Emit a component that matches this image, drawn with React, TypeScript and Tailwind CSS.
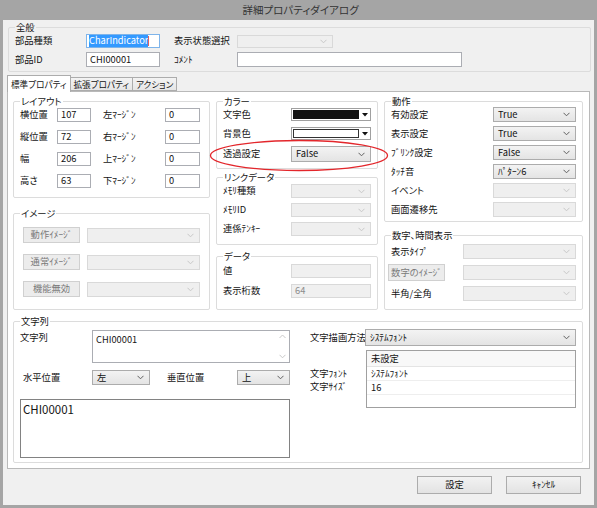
import React from "react";

const font = "font-['Noto_Sans_CJK_JP',sans-serif]";

function Chevron({ light = false }: { light?: boolean }) {
  return (
    <svg width="7" height="5" viewBox="0 0 7 5" className="shrink-0">
      <polyline points="0.5,0.8 3.5,3.8 6.5,0.8" fill="none" stroke={light ? "#c8c8c8" : "#606060"} strokeWidth="1" />
    </svg>
  );
}

function Combo({ className = "", value = "", disabled = false }: { className?: string; value?: string; disabled?: boolean }) {
  return (
    <div
      className={`flex items-center justify-between pl-[4px] pr-[5px] border leading-none whitespace-nowrap ${
        disabled ? "border-[#d9d9d9] bg-[#efefef] text-[#9a9a9a]" : "border-[#acacac] bg-linear-to-b from-[#f3f3f3] to-[#e4e4e4] text-[#111]"
      } ${className}`}
    >
      <span>{value}</span>
      <Chevron light={disabled} />
    </div>
  );
}

function Field({ className = "", value = "", disabled = false }: { className?: string; value?: string; disabled?: boolean }) {
  return (
    <div
      className={`flex items-center px-[3px] border leading-none ${
        disabled ? "border-[#d9d9d9] bg-[#f0f0f0] text-[#8c8c8c]" : "border-[#abadb3] bg-white text-[#111]"
      } ${className}`}
    >
      {value}
    </div>
  );
}

function Group({ label, className = "", children }: { label: string; className?: string; children?: React.ReactNode }) {
  return (
    <fieldset className={`border border-[#dcdcdc] rounded-[2px] px-[6px] min-w-0 ${className}`}>
      <legend className="px-[1px] leading-[12px] text-[#141414]">{label}</legend>
      {children}
    </fieldset>
  );
}

function ColorCombo({ dark }: { dark: boolean }) {
  return (
    <div className="w-[80px] h-[13px] border border-[#a0a0a0] bg-white flex items-center pl-[1px] py-[1px]">
      <div className={`flex-1 h-full ${dark ? "bg-[#111]" : "bg-white border border-[#333]"}`} />
      <div className="w-[11px] flex justify-center">
        <svg width="6" height="4" viewBox="0 0 6 4">
          <polygon points="0,0 6,0 3,3.5" fill="#111" />
        </svg>
      </div>
    </div>
  );
}

function ImgButton({ label, className = "" }: { label: string; className?: string }) {
  return (
    <div className={`w-[57px] h-[16px] border border-[#d0d0d0] bg-[#ececec] text-[#7a7a7a] flex items-center justify-center leading-none whitespace-nowrap ${className}`}>
      {label}
    </div>
  );
}

function Btn({ label }: { label: string }) {
  return (
    <div className="w-[75px] h-[18px] border border-[#acacac] bg-linear-to-b from-[#f2f2f2] to-[#e3e3e3] flex items-center justify-center leading-none">
      {label}
    </div>
  );
}

export default function App() {
  return (
    <div className={`relative w-[597px] h-[508px] bg-[#a5a5a5] flex flex-col ${font} [font-feature-settings:'palt'] text-[9.3px] text-[#141414]`}>
      <div className="h-[20px] flex items-center justify-center text-[10.5px] text-[#333] pl-[4px]">詳細プロパティダイアログ</div>

      <div className="flex-1 mx-[3px] mb-[3px] bg-[#f0f0f0] flex flex-col">
        <Group label="全般" className="mt-[1px] ml-[5px] mr-[3px] h-[51px]">
          <div className="mt-[1px] h-[14px] flex items-center">
            <span className="w-[71px]">部品種類</span>
            <div className="w-[74px] h-[14px] border border-[#7eb4ea] bg-white flex items-center pl-[2px] leading-none">
              <span className="bg-[#3399ff] text-white py-[1px]">CharIndicator</span>
              <span className="w-px h-[10px] bg-[#e06060]" />
            </div>
            <span className="ml-[14px] w-[63px]">表示状態選択</span>
            <Combo disabled className="w-[96px] h-[13px]" />
          </div>
          <div className="mt-[4px] h-[15px] flex items-center">
            <span className="w-[71px]">部品ID</span>
            <Field value="CHI00001" className="w-[74px] h-[15px]" />
            <span className="ml-[14px] w-[63px]">ｺﾒﾝﾄ</span>
            <Field className="w-[225px] h-[15px]" />
          </div>
        </Group>

        <div className="mt-[3px] ml-[4px] h-[16px] flex items-end relative z-10 whitespace-nowrap text-[8.6px]">
          <div className="h-[17px] px-[3px] -mb-[1px] bg-white border border-[#acacac] border-b-0 flex items-center justify-center leading-none">標準プロパティ</div>
          <div className="h-[14px] px-[3px] bg-linear-to-b from-[#f3f3f3] to-[#e6e6e6] border border-[#acacac] border-l-0 flex items-center justify-center leading-none">拡張プロパティ</div>
          <div className="h-[14px] px-[3px] bg-linear-to-b from-[#f3f3f3] to-[#e6e6e6] border border-[#acacac] border-l-0 flex items-center justify-center leading-none">アクション</div>
        </div>

        <div className="ml-[4px] mr-[4px] h-[378px] border border-[#b9b9b9] bg-white pt-[3px] pl-[5px] pr-[6px] flex flex-col">
          <div className="flex gap-[6px]">
            <div className="w-[197px] flex flex-col">
              <Group label="レイアウト" className="h-[103px]">
                <div className="mt-[1px] flex flex-col gap-[8px]">
                  {[
                    ["横位置", "107", "左ﾏｰｼﾞﾝ"],
                    ["縦位置", "72", "右ﾏｰｼﾞﾝ"],
                    ["幅", "206", "上ﾏｰｼﾞﾝ"],
                    ["高さ", "63", "下ﾏｰｼﾞﾝ"],
                  ].map(([a, v, b]) => (
                    <div key={a} className="h-[14px] flex items-center">
                      <span className="w-[37px]">{a}</span>
                      <Field value={v} className="w-[34px] h-[14px]" />
                      <span className="ml-[12px] w-[62px]">{b}</span>
                      <Field value="0" className="w-[35px] h-[14px]" />
                    </div>
                  ))}
                </div>
              </Group>
              <Group label="イメージ" className="mt-[9px] h-[103px]">
                <div className="mt-[8px] flex flex-col gap-[11px]">
                  {["動作ｲﾒｰｼﾞ", "通常ｲﾒｰｼﾞ", "機能無効"].map((l) => (
                    <div key={l} className="h-[16px] flex items-center ml-[3px]">
                      <ImgButton label={l} />
                      <Combo disabled className="ml-[7px] w-[113px] h-[15px]" />
                    </div>
                  ))}
                </div>
              </Group>
            </div>

            <div className="w-[162px] flex flex-col">
              <Group label="カラー" className="h-[74px]">
                <div className="mt-[1px] h-[13px] flex items-center">
                  <span className="w-[68px]">文字色</span>
                  <ColorCombo dark />
                </div>
                <div className="mt-[6px] h-[13px] flex items-center">
                  <span className="w-[68px]">背景色</span>
                  <ColorCombo dark={false} />
                </div>
                <div className="mt-[6px] h-[16px] flex items-center">
                  <span className="w-[68px]">透過設定</span>
                  <Combo value="False" className="w-[80px] h-[16px]" />
                </div>
              </Group>
              <Group label="リンクデータ" className="mt-[2px] h-[74px]">
                <div className="mt-[1px] flex flex-col gap-[5px]">
                  {["ﾒﾓﾘ種類", "ﾒﾓﾘID", "連係ﾃﾝｷｰ"].map((l) => (
                    <div key={l} className="h-[14px] flex items-center">
                      <span className="w-[68px]">{l}</span>
                      <Combo disabled className="w-[80px] h-[14px]" />
                    </div>
                  ))}
                </div>
              </Group>
              <Group label="データ" className="mt-[5px] h-[60px]">
                <div className="mt-[2px] flex flex-col gap-[6px]">
                  <div className="h-[14px] flex items-center">
                    <span className="w-[68px]">値</span>
                    <Field disabled className="w-[80px] h-[14px]" />
                  </div>
                  <div className="h-[14px] flex items-center">
                    <span className="w-[68px]">表示桁数</span>
                    <Field disabled value="64" className="w-[80px] h-[14px]" />
                  </div>
                </div>
              </Group>
            </div>

            <div className="w-[199px] flex flex-col">
              <Group label="動作" className="h-[127px]">
                <div className="flex flex-col gap-[4px]">
                  {[
                    ["有効設定", "True", false],
                    ["表示設定", "True", false],
                    ["ﾌﾞﾘﾝｸ設定", "False", false],
                    ["ﾀｯﾁ音", "ﾊﾟﾀｰﾝ6", false],
                    ["イベント", "", true],
                    ["画面遷移先", "", true],
                  ].map(([l, v, d]) => (
                    <div key={l as string} className="h-[15px] flex items-center">
                      <span className="w-[102px]">{l as string}</span>
                      <Combo value={v as string} disabled={d as boolean} className="w-[83px] h-[15px]" />
                    </div>
                  ))}
                </div>
              </Group>
              <Group label="数字、時間表示" className="mt-[7px] h-[81px]">
                <div className="mt-[3px] h-[15px] flex items-center">
                  <span className="w-[72px]">表示ﾀｲﾌﾟ</span>
                  <Combo disabled className="w-[113px] h-[15px]" />
                </div>
                <div className="mt-[5px] h-[17px] flex items-center">
                  <ImgButton label="数字のｲﾒｰｼﾞ" className="-ml-[3px] h-[17px]" />
                  <Combo disabled className="ml-[18px] w-[113px] h-[15px]" />
                </div>
                <div className="mt-[5px] h-[15px] flex items-center">
                  <span className="w-[72px]">半角/全角</span>
                  <Combo disabled className="w-[113px] h-[15px]" />
                </div>
              </Group>
            </div>
          </div>

          <Group label="文字列" className="mt-[5px] h-[148px]">
            <div className="flex">
              <div className="w-[272px] flex flex-col">
                <div className="mt-[3px] flex">
                  <span className="w-[72px] pt-[1px] leading-[12px]">文字列</span>
                  <div className="w-[198px] h-[33px] border border-[#abadb3] bg-white flex">
                    <span className="flex-1 px-[3px] pt-[2px] leading-[12px]">CHI00001</span>
                    <div className="w-[13px] flex flex-col items-center justify-between py-[3px]">
                      <svg width="7" height="5" viewBox="0 0 7 5">
                        <polyline points="0.5,4 3.5,1 6.5,4" fill="none" stroke="#c8c8c8" strokeWidth="1" />
                      </svg>
                      <Chevron light />
                    </div>
                  </div>
                </div>
                <div className="mt-[7px] h-[15px] flex items-center">
                  <span className="ml-[3px] w-[69px]">水平位置</span>
                  <Combo value="左" className="w-[58px] h-[15px]" />
                  <span className="ml-[17px] w-[70px]">垂直位置</span>
                  <Combo value="上" className="w-[53px] h-[15px]" />
                </div>
                <div className="mt-[14px] w-[270px] h-[59px] border border-[#828282] bg-white text-[11.5px] px-[2px] pt-[2px] leading-[14px]">CHI00001</div>
              </div>

              <div className="ml-[20px] w-[266px] flex flex-col">
                <div className="mt-[2px] h-[17px] flex items-center">
                  <span className="w-[55px] whitespace-nowrap">文字描画方法</span>
                  <Combo value="ｼｽﾃﾑﾌｫﾝﾄ" className="w-[211px] h-[17px]" />
                </div>
                <div className="mt-[4px] flex">
                  <div className="w-[56px] pt-[17px] flex flex-col gap-[1px] leading-[12px]">
                    <span>文字ﾌｫﾝﾄ</span>
                    <span>文字ｻｲｽﾞ</span>
                  </div>
                  <div className="w-[210px] h-[58px] border border-[#a0a0a0] bg-white flex flex-col leading-none">
                    <div className="h-[16px] bg-[#f8f8f8] border-b border-[#e4e4e4] flex items-center px-[4px]">未設定</div>
                    <div className="h-[14px] border-b border-[#eeeeee] flex items-center px-[4px]">ｼｽﾃﾑﾌｫﾝﾄ</div>
                    <div className="h-[14px] border-b border-[#eeeeee] flex items-center px-[4px]">16</div>
                  </div>
                </div>
              </div>
            </div>
          </Group>
        </div>

        <div className="mt-[7px] flex justify-end gap-[14px] pr-[13px]">
          <Btn label="設定" />
          <Btn label="ｷｬﾝｾﾙ" />
        </div>
      </div>

      <svg className="absolute left-[209px] top-[139px]" width="180" height="34" viewBox="0 0 180 34">
        <ellipse cx="90" cy="16.5" rx="88.5" ry="15" fill="none" stroke="#e3262b" strokeWidth="1.3" />
      </svg>
    </div>
  );
}
